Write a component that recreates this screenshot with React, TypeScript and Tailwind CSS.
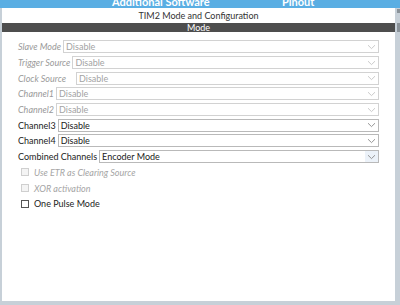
import { type FC } from 'react';

const font = { fontFamily: 'Lato, "Noto Sans", "DejaVu Sans", sans-serif' };

interface RowProps {
  label: string;
  value: string;
  disabled?: boolean;
  highlight?: boolean;
  gap?: string;
}

const Chevron: FC<{ disabled?: boolean }> = ({ disabled }) => (
  <svg width="9" height="6" viewBox="0 0 9 6" className="shrink-0">
    <path d="M1 1.2 L4.5 4.6 L8 1.2" fill="none" stroke={disabled ? '#c4c4c4' : '#8a8a8a'} strokeWidth="0.9" />
  </svg>
);

const SelectRow: FC<RowProps> = ({ label, value, disabled, highlight, gap = 'ml-[2px]' }) => (
  <div className="flex items-center h-[15.7px]">
    <span className={`text-[9px] leading-none whitespace-nowrap ${disabled ? 'italic text-[#9a9a9a]' : 'text-[#222]'}`}>{label}</span>
    <div
      className={`${gap} flex-1 flex items-center h-[13px] border ${disabled ? 'border-[#d2d2d2] bg-white' : 'border-[#b9b9b9] bg-white'} ${highlight ? 'bg-[#dde9f7]' : ''}`}
    >
      <span className={`pl-[2px] flex-1 text-[9px] leading-none ${disabled ? 'text-[#a3a3a3]' : 'text-[#1a1a1a]'}`}>{value}</span>
      <div className={`h-full w-[13px] flex items-center justify-center ${highlight ? 'bg-[#ecf2f9]' : ''}`}>
        <Chevron disabled={disabled} />
      </div>
    </div>
  </div>
);

const Check: FC<{ label: string; disabled?: boolean }> = ({ label, disabled }) => (
  <div className="flex items-center h-[15.7px] pl-[3px]">
    <div className={`w-[8px] h-[8px] border ${disabled ? 'border-[#cfcfcf] bg-[#f4f4f4]' : 'border-[#555] bg-white'}`} />
    <span className={`ml-[5px] text-[9px] leading-none ${disabled ? 'italic text-[#a5a5a5]' : 'text-[#222]'}`}>{label}</span>
  </div>
);

export default function App() {
  return (
    <div className="w-[400px] h-[305px] bg-[#c7d0d8] flex flex-col overflow-hidden" style={font}>
      <div className="h-[8px] bg-[#5aaee3] relative overflow-hidden">
        <div className="absolute left-[112px] top-[-4px] text-[11px] font-bold text-white leading-none">Additional Software</div>
        <div className="absolute left-[282px] top-[-4px] text-[11px] font-bold text-white leading-none">Pinout</div>
      </div>
      <div className="flex flex-1">
        <div className="w-[2px]" />
        <div className="flex-1 bg-white flex flex-col mb-[4px]">
          <div className="h-[15px] flex items-center justify-center text-[9px] text-[#333]">TIM2 Mode and Configuration</div>
          <div className="h-[9px] bg-[#4e4e4e] flex items-center justify-center text-[9px] text-white leading-none">Mode</div>
          <div className="pl-[16px] pr-[16px] pt-[7px] flex flex-col">
            <SelectRow label="Slave Mode" value="Disable" disabled />
            <SelectRow label="Trigger Source" value="Disable" disabled />
            <SelectRow label="Clock Source" value="Disable" disabled gap="ml-[10px]" />
            <SelectRow label="Channel1" value="Disable" disabled />
            <SelectRow label="Channel2" value="Disable" disabled />
            <SelectRow label="Channel3" value="Disable" />
            <SelectRow label="Channel4" value="Disable" />
            <SelectRow label="Combined Channels" value="Encoder Mode" highlight />
            <Check label="Use ETR as Clearing Source" disabled />
            <Check label="XOR activation" disabled />
            <Check label="One Pulse Mode" />
          </div>
        </div>
        <div className="w-[5px] flex flex-col">
          <div className="h-[4px] mt-[1px] w-[3px] ml-[2px] bg-[#8a9299]" />
          <div className="h-[9px] mt-[10px] w-[3px] ml-[2px] bg-[#8a9299]" />
        </div>
      </div>
    </div>
  );
}
